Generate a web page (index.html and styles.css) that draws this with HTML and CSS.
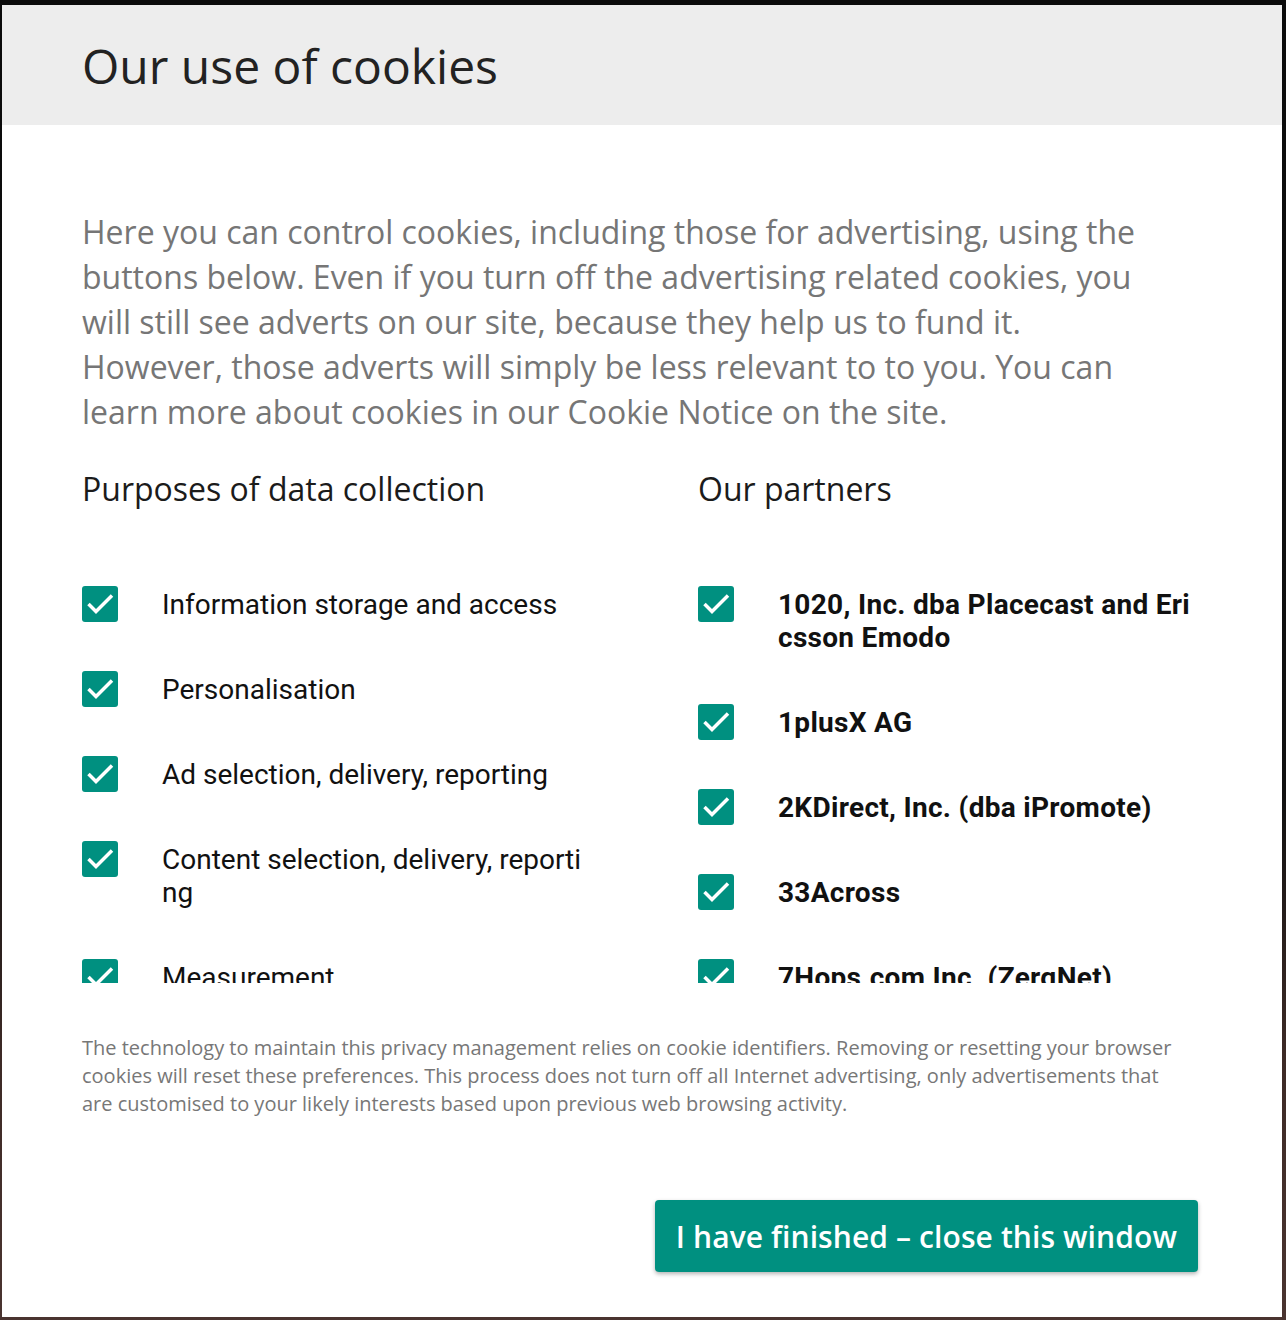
FILE: index.html
```html
<!DOCTYPE html>
<html lang="en">
<head>
<meta charset="utf-8">
<title>Our use of cookies</title>
<link rel="stylesheet" href="styles.css">
</head>
<body>
<div class="modal">
  <header class="modal-header">
    <h1 class="title">Our use of cookies</h1>
  </header>
  <div class="modal-body">
    <p class="intro">Here you can control cookies, including those for advertising, using the buttons below. Even if you turn off the advertising related cookies, you will still see adverts on our site, because they help us to fund it. However, those adverts will simply be less relevant to to you. You can learn more about cookies in our Cookie Notice on the site.</p>
    <div class="columns">
      <section class="col">
        <h2 class="col-title">Purposes of data collection</h2>
        <ul class="list">
          <li class="item"><span class="check"><svg viewBox="0 0 36 36"><path d="M6.5 18 L14 25.5 L30 9.5"/></svg></span><span class="label">Information storage and access</span></li>
          <li class="item"><span class="check"><svg viewBox="0 0 36 36"><path d="M6.5 18 L14 25.5 L30 9.5"/></svg></span><span class="label">Personalisation</span></li>
          <li class="item"><span class="check"><svg viewBox="0 0 36 36"><path d="M6.5 18 L14 25.5 L30 9.5"/></svg></span><span class="label">Ad selection, delivery, reporting</span></li>
          <li class="item"><span class="check"><svg viewBox="0 0 36 36"><path d="M6.5 18 L14 25.5 L30 9.5"/></svg></span><span class="label">Content selection, delivery, reporting</span></li>
          <li class="item"><span class="check"><svg viewBox="0 0 36 36"><path d="M6.5 18 L14 25.5 L30 9.5"/></svg></span><span class="label">Measurement</span></li>
        </ul>
      </section>
      <section class="col">
        <h2 class="col-title">Our partners</h2>
        <ul class="list partners">
          <li class="item"><span class="check"><svg viewBox="0 0 36 36"><path d="M6.5 18 L14 25.5 L30 9.5"/></svg></span><span class="label">1020, Inc. dba Placecast and Ericsson Emodo</span></li>
          <li class="item"><span class="check"><svg viewBox="0 0 36 36"><path d="M6.5 18 L14 25.5 L30 9.5"/></svg></span><span class="label">1plusX AG</span></li>
          <li class="item"><span class="check"><svg viewBox="0 0 36 36"><path d="M6.5 18 L14 25.5 L30 9.5"/></svg></span><span class="label">2KDirect, Inc. (dba iPromote)</span></li>
          <li class="item"><span class="check"><svg viewBox="0 0 36 36"><path d="M6.5 18 L14 25.5 L30 9.5"/></svg></span><span class="label">33Across</span></li>
          <li class="item"><span class="check"><svg viewBox="0 0 36 36"><path d="M6.5 18 L14 25.5 L30 9.5"/></svg></span><span class="label">7Hops.com Inc. (ZergNet)</span></li>
        </ul>
      </section>
    </div>
    <p class="note">The technology to maintain this privacy management relies on cookie identifiers. Removing or resetting your browser cookies will reset these preferences. This process does not turn off all Internet advertising, only advertisements that are customised to your likely interests based upon previous web browsing activity.</p>
    <div class="actions">
      <button class="btn" type="button">I have finished – close this window</button>
    </div>
  </div>
</div>
</body>
</html>
```

FILE: styles.css
```css
html, body {
  margin: 0;
  padding: 0;
}
body {
  width: 1286px;
  height: 1320px;
  overflow: hidden;
  background: linear-gradient(180deg, #0b0b0b 0%, #111 60%, #3d2a26 80%, #4a3430 100%);
  font-family: "Open Sans", "Noto Sans", sans-serif;
}
.modal {
  margin: 5px 0 0 2px;
  width: 1280px;
  height: 1312px;
  background: #fff;
  display: flex;
  flex-direction: column;
}
.modal-header {
  height: 120px;
  flex: none;
  background: #ededed;
  display: flex;
  align-items: center;
  padding-left: 80px;
}
.title {
  margin: 0;
  font-size: 48px;
  font-weight: 400;
  color: #222;
  line-height: 65px;
}
.modal-body {
  padding: 84px 82px 0 80px;
}
.intro {
  margin: 0;
  max-width: 1066px;
  font-size: 32px;
  line-height: 45px;
  color: #767676;
}
.columns {
  display: grid;
  grid-template-columns: 1fr 1fr;
  column-gap: 114px;
  margin-top: 33px;
}
.col-title {
  margin: 0;
  font-size: 32px;
  font-weight: 400;
  line-height: 43px;
  color: #1b1b1b;
}
.list {
  list-style: none;
  margin: 76px 0 0;
  padding: 0;
  height: 397px;
  overflow: hidden;
}
.item {
  display: flex;
  align-items: flex-start;
  gap: 44px;
  padding-bottom: 50px;
}
.check {
  flex: none;
  width: 36px;
  height: 36px;
  margin-bottom: -5px;
  border-radius: 3px;
  background: #009080;
  display: flex;
}
.check svg {
  width: 36px;
  height: 36px;
  fill: none;
  stroke: #fff;
  stroke-width: 3.5;
}
.label {
  flex: 1;
  min-width: 0;
  margin-top: 2px;
  font-family: Roboto, "Liberation Sans", sans-serif;
  font-size: 28px;
  line-height: 33px;
  color: #111;
  word-break: break-all;
}
.partners .label {
  font-weight: 700;
  letter-spacing: 0.3px;
}
.note {
  margin: 51px 0 0;
  max-width: 1100px;
  font-size: 20px;
  line-height: 28px;
  color: #777;
}
.actions {
  display: flex;
  justify-content: flex-end;
  margin-top: 82px;
  padding-right: 2px;
}
.btn {
  height: 72px;
  padding: 0 21px;
  border: none;
  border-radius: 4px;
  background: #009080;
  color: #fff;
  font-family: "Open Sans", "Noto Sans", sans-serif;
  font-size: 30px;
  font-weight: 600;
  letter-spacing: 0.1px;
  box-shadow: 0 2px 4px rgba(0, 0, 0, 0.3);
  cursor: pointer;
}
```
